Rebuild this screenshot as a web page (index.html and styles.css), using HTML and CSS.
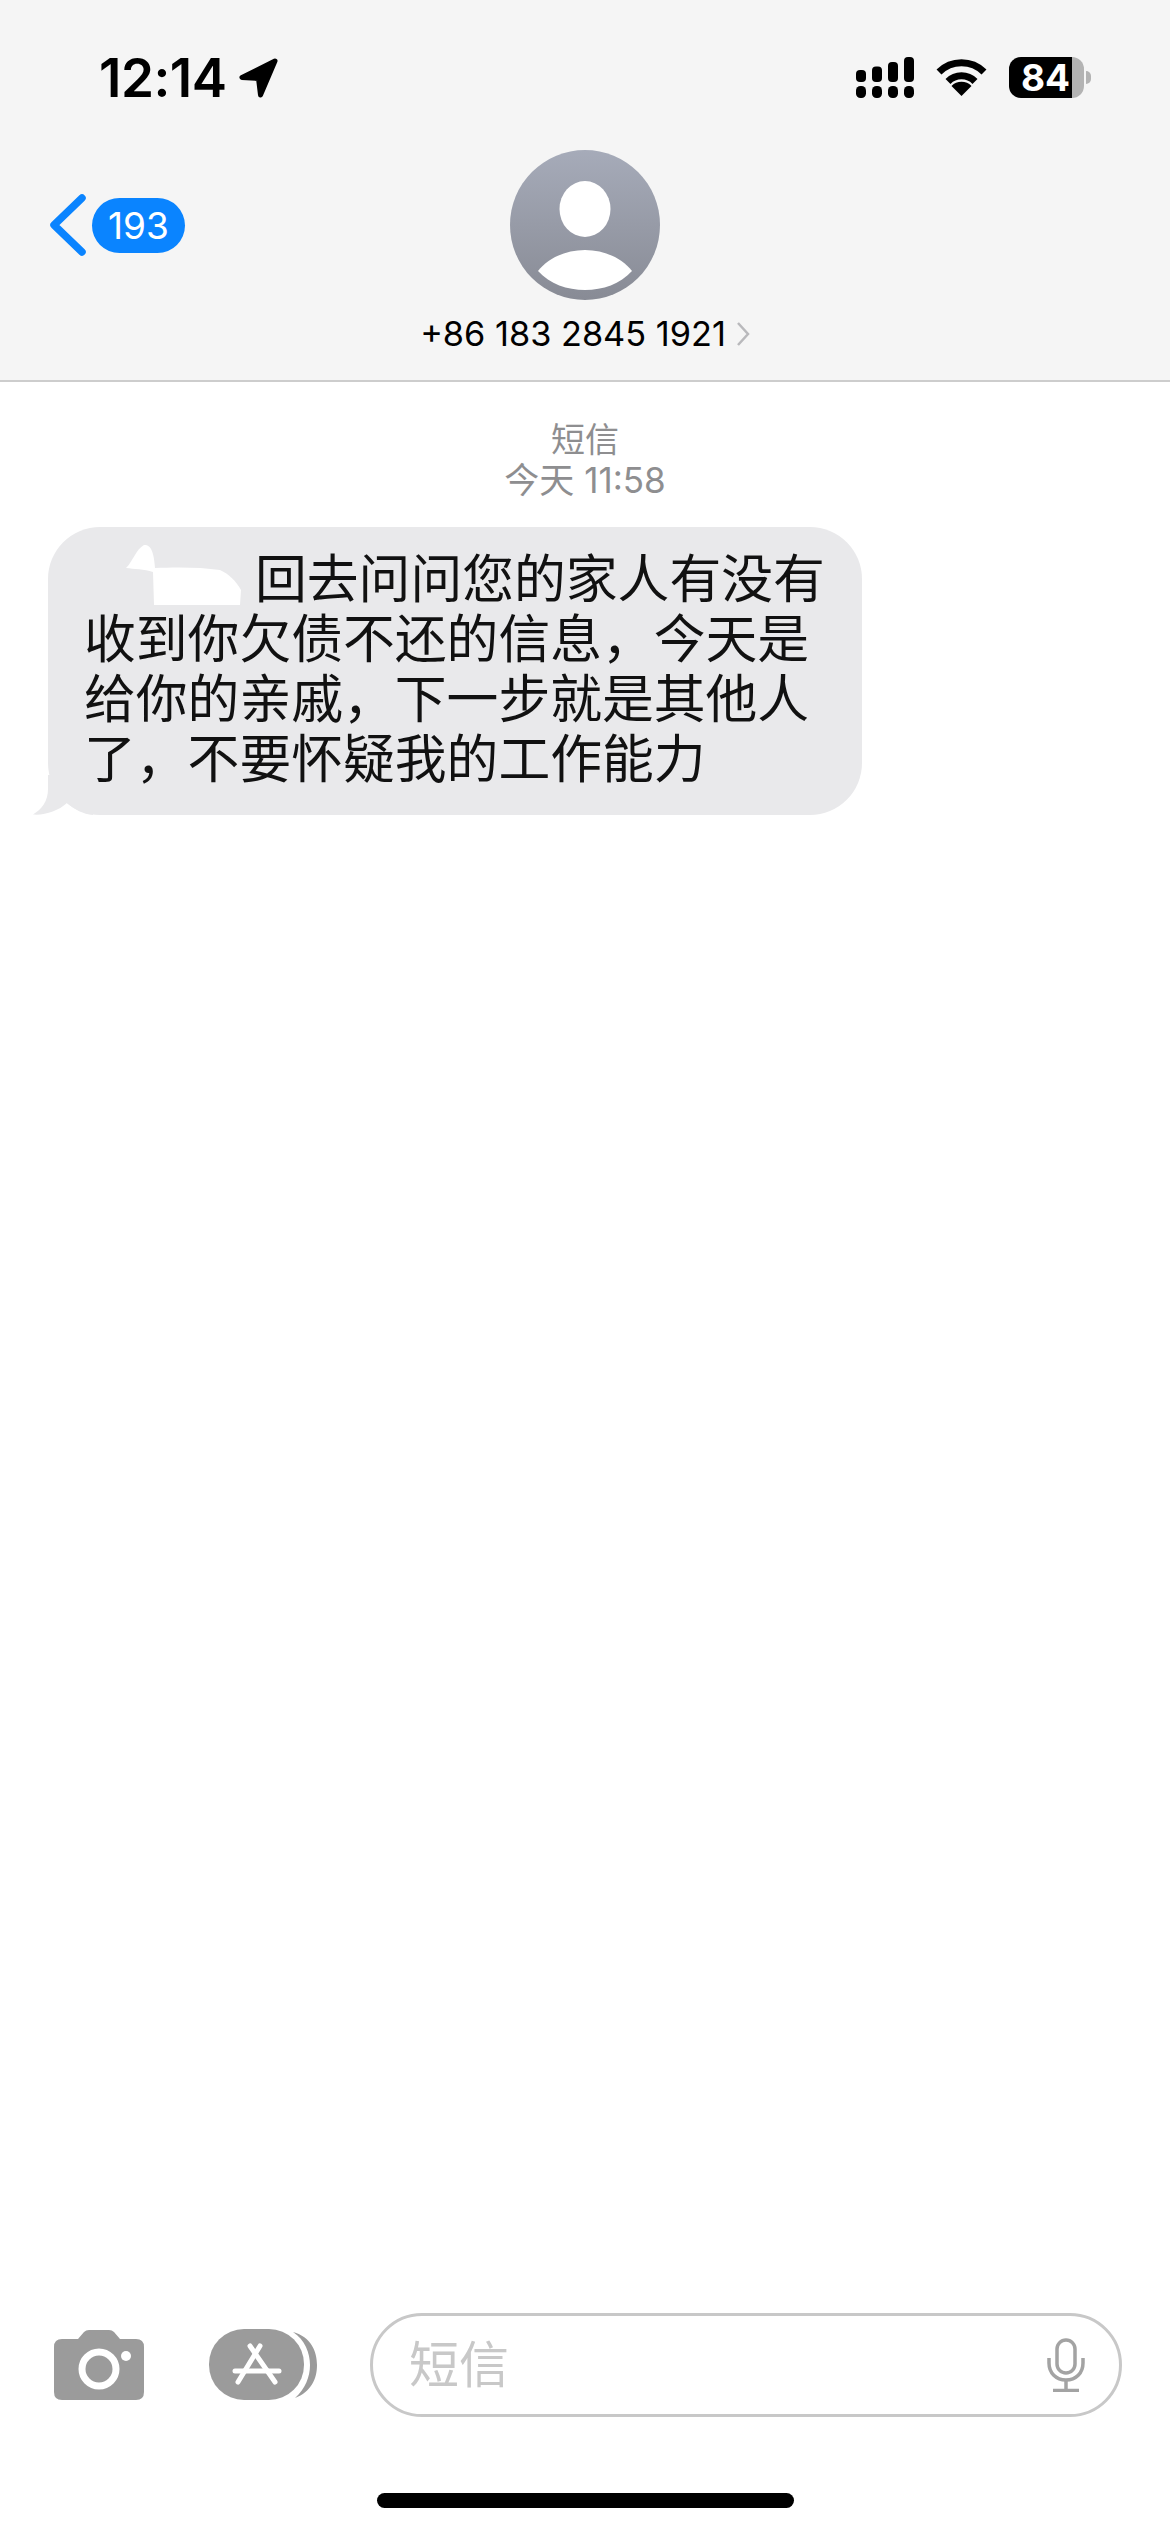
FILE: index.html
```html
<!DOCTYPE html>
<html lang="zh-CN">
  <head>
    <meta charset="UTF-8" />
    <meta name="viewport" content="width=device-width, initial-scale=1.0" />
    <title>短信</title>
    <link rel="stylesheet" href="styles.css">
  </head>
  <body>
    <!-- top bar -->
    <header class="top">
      <div class="status">
        <div class="status-left">
          <span class="time">12:14</span>
          <svg class="arrow" width="40" height="40" viewBox="0 0 40 40"><path d="M36 3 L3 19.500 L19.500 20.500 L21.500 37 Z" fill="#000" stroke="#000" stroke-width="5" stroke-linejoin="round"/></svg>
        </div>
        <div class="status-right">
          <svg width="58" height="41" viewBox="0 0 58 41" fill="#000">
            <rect x="0" y="13" width="10" height="12" rx="4"/>
            <rect x="16" y="9.500" width="10" height="15.500" rx="4"/>
            <rect x="32" y="5" width="10" height="20" rx="4"/>
            <rect x="48" y="0" width="10" height="25" rx="4"/>
            <rect x="0" y="29" width="10" height="12" rx="4.500"/>
            <rect x="16" y="29" width="10" height="12" rx="4.500"/>
            <rect x="32" y="29" width="10" height="12" rx="4.500"/>
            <rect x="48" y="29" width="10" height="12" rx="4.500"/>
          </svg>
          <svg width="51" height="38" viewBox="0 0 51 38" fill="none" stroke="#000" stroke-width="7">
            <path d="M3 13 A32 32 0 0 1 48 13"/>
            <path d="M12 22.500 A19 19 0 0 1 39 22.500"/>
            <path d="M25.500 37 L15.500 27 A14 14 0 0 1 35.500 27 Z" fill="#000" stroke="none"/>
          </svg>
          <div class="battery">
            <div class="battery-body"><span class="battery-num">84</span></div>
            <div class="battery-nub"></div>
          </div>
        </div>
      </div>

      <div class="nav">
        <div class="back">
          <svg width="38" height="64" viewBox="0 0 38 64"><path d="M33 5 L5 32 L33 59" fill="none" stroke="#0a84ff" stroke-width="7.500" stroke-linecap="round" stroke-linejoin="round"/></svg>
          <span class="badge">193</span>
        </div>
        <div class="contact">
          <svg class="avatar" width="150" height="150" viewBox="0 0 150 150">
            <defs>
              <linearGradient id="avatarBg" x1="0" y1="0" x2="0" y2="1">
                <stop offset="0" stop-color="#a6abb9"/>
                <stop offset="1" stop-color="#888b95"/>
              </linearGradient>
            </defs>
            <circle cx="75" cy="75" r="75" fill="url(#avatarBg)"/>
            <ellipse cx="75" cy="59" rx="25.500" ry="28" fill="#fff"/>
            <path d="M28 121 C38 108 56 100 75 100 C94 100 112 108 122 121 C110 134 93 140 75 140 C57 140 40 134 28 121 Z" fill="#fff"/>
          </svg>
          <div class="phone">
            <span>+86 183 2845 1921</span>
            <svg width="14" height="26" viewBox="0 0 14 26"><path d="M2 2 L12 13 L2 24" fill="none" stroke="#b9b9bc" stroke-width="2.500"/></svg>
          </div>
        </div>
        <div></div>
      </div>
    </header>

    <!-- messages -->
    <main class="messages">
      <div class="meta">
        <div class="meta-type">短信</div>
        <div>今天 11:58</div>
      </div>
      <div class="bubble">
        <svg class="tail" width="60" height="40" viewBox="0 0 60 40"><path d="M15 0 L15 14 C15 26 9 34 0 39.500 C12 40.500 25 36 34 28 C42 35 50 39 60 40 L60 0 Z" fill="#e9e9eb"/></svg>
        <svg class="mask" width="118" height="64" viewBox="0 0 118 64"><path d="M0 23 C6 18 10 4 18 0 C25 -1 28 8 29 23 C50 22 75 22 94 25 C103 29 110 36 115 45 L114 60 L28 60 L27 27 C18 24 8 24 0 23 Z" fill="#fff"/></svg>
        <p class="bubble-text">回去问问您的家人有没有收到你欠债不还的信息，今天是给你的亲戚，下一步就是其他人了，不要怀疑我的工作能力</p>
      </div>
    </main>

    <!-- input row -->
    <footer class="composer">
      <svg width="90" height="70" viewBox="0 0 90 70">
        <path d="M8 9 H24 L30 2 Q32 0 35 0 H55 Q58 0 60 2 L66 9 H82 Q90 9 90 17 V62 Q90 70 82 70 H8 Q0 70 0 62 V17 Q0 9 8 9 Z" fill="#9b9b9b"/>
        <circle cx="45" cy="39" r="17" fill="none" stroke="#fff" stroke-width="7"/>
        <circle cx="72" cy="26" r="5" fill="#fff"/>
      </svg>
      <svg class="apps" width="109" height="72" viewBox="0 0 109 72">
        <path d="M84 3 C102 8 108 22 108 36 C108 50 102 63 86 69 C96 60 101 48 101 36 C101 24 96 11 84 3 Z" fill="#9b9b9b"/>
        <rect x="0" y="0" width="95" height="71" rx="35" fill="#9b9b9b"/>
        <g fill="none" stroke="#fff" stroke-width="5" stroke-linecap="round">
          <path d="M51 17 L29 53"/>
          <path d="M41 17 L66 53"/>
          <path d="M26 42 H70"/>
        </g>
      </svg>
      <div class="input">
        <span class="placeholder">短信</span>
        <svg width="38" height="54" viewBox="0 0 38 54" fill="none" stroke="#a3a3a3" stroke-width="3.500">
          <rect x="10" y="2" width="18" height="33" rx="9"/>
          <path d="M2 20 V25 C2 35 9 42 19 42 C29 42 36 35 36 25 V20"/>
          <path d="M19 42 V52"/>
          <path d="M6 52.500 H32"/>
        </svg>
      </div>
    </footer>
    <div class="home-row"><div class="home-bar"></div></div>
  </body>
</html>
```

FILE: styles.css
```css
* {
  box-sizing: border-box;
}

body {
  margin: 0;
  width: 1170px;
  height: 2532px;
  display: flex;
  flex-direction: column;
  background-color: #fff;
  color: #000;
  font-family: Inter, "Noto Sans CJK SC", sans-serif;
  overflow: hidden;
}

/* top bar */
.top {
  height: 382px;
  background-color: #f5f5f5;
  border-bottom: 2px solid #cdcdcd;
}

.status {
  height: 150px;
  padding: 57px 79px 0 99px;
  display: flex;
  justify-content: space-between;
  align-items: flex-start;
}

.status-left {
  display: flex;
  align-items: center;
  gap: 12px;
}

.time {
  font-size: 53px;
  line-height: 42px;
  font-weight: 600;
  letter-spacing: -0.5px;
}

.status-right {
  display: flex;
  align-items: center;
  gap: 22px;
}

.battery {
  display: flex;
  align-items: center;
  gap: 2px;
}

.battery-body {
  width: 75px;
  height: 41px;
  border-radius: 12px;
  background: linear-gradient(to right, #000 84%, #b3b3b3 84%);
  display: flex;
  align-items: center;
  padding-left: 12px;
}

.battery-num {
  color: #fff;
  font-size: 37px;
  line-height: 41px;
  font-weight: 700;
}

.battery-nub {
  width: 5px;
  height: 13px;
  border-radius: 0 6px 6px 0;
  background-color: #b3b3b3;
}

.nav {
  display: grid;
  grid-template-columns: 1fr auto 1fr;
}

.back {
  display: flex;
  align-items: center;
  gap: 5px;
  height: 150px;
  padding-left: 49px;
}

.badge {
  width: 93px;
  height: 55px;
  border-radius: 28px;
  background-color: #0a84ff;
  color: #fff;
  font-size: 37px;
  line-height: 55px;
  text-align: center;
}

.contact {
  display: flex;
  flex-direction: column;
  align-items: center;
}

.avatar {
  display: block;
}

.phone {
  margin-top: 14px;
  display: flex;
  align-items: center;
  gap: 10px;
  font-size: 34.300px;
  line-height: 40px;
  white-space: nowrap;
}

/* messages */
.messages {
  flex: 1;
  padding: 38px 0 0 48px;
}

.meta {
  margin-left: -48px;
  text-align: center;
  color: #8e8e90;
  font-size: 35px;
  line-height: 40px;
}

.meta-type {
  font-size: 34px;
}

.bubble {
  position: relative;
  width: 814px;
  height: 288px;
  margin-top: 27px;
  padding: 22px 30px 0 36px;
  border-radius: 52px;
  background-color: #e9e9eb;
}

.tail {
  position: absolute;
  left: -15px;
  bottom: 0;
}

.mask {
  position: absolute;
  left: 78px;
  top: 18px;
}

.bubble-text {
  position: relative;
  margin: 0;
  font-size: 51.800px;
  line-height: 60px;
  text-indent: 171px;
  color: #111;
}

/* input row */
.composer {
  display: flex;
  align-items: center;
  padding: 0 48px 0 54px;
  height: 104px;
}

.apps {
  margin-left: 65px;
  margin-right: 52px;
  flex: none;
}

.input {
  flex: 1;
  height: 104px;
  border: 3px solid #c8c8c8;
  border-radius: 52px;
  padding: 0 34px 0 36px;
  display: flex;
  align-items: center;
  justify-content: space-between;
}

.placeholder {
  font-size: 50px;
  line-height: 60px;
  color: #c8c8c8;
}

.home-row {
  height: 115px;
  padding-top: 76px;
  display: flex;
  justify-content: center;
}

.home-bar {
  width: 417px;
  height: 15px;
  border-radius: 8px;
  background-color: #000;
}
```
